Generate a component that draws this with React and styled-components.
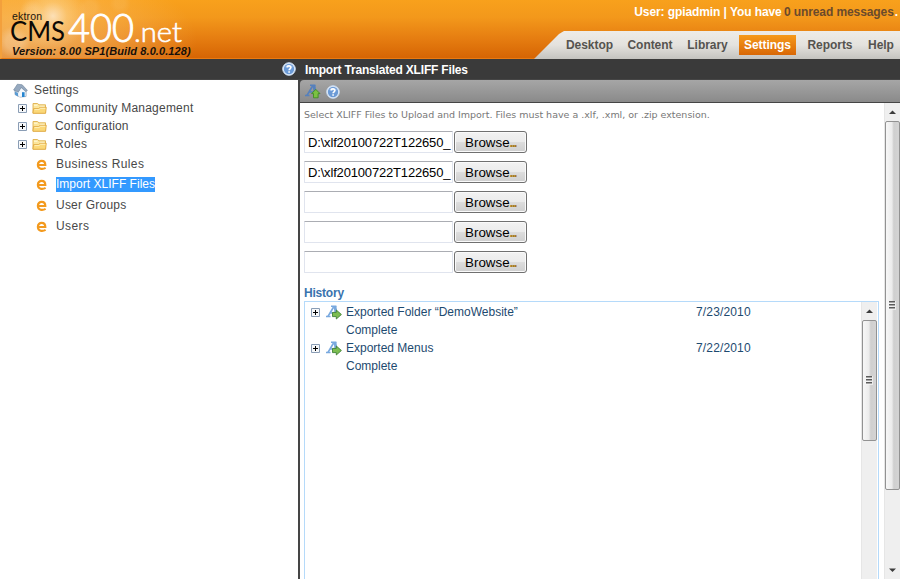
import React from 'react';
import styled, { createGlobalStyle } from 'styled-components';

const Global = createGlobalStyle`
  * { box-sizing: border-box; }
  body { margin: 0; background: #fff; font-family: "Liberation Sans", Arial, sans-serif; overflow: hidden; }
  svg { display: block; flex: none; overflow: visible; }
`;

const Page = styled.div`
  width: 900px; height: 579px; overflow: hidden; display: flex; flex-direction: column; white-space: nowrap;
`;
const Header = styled.header`
  height: 59px; flex: none; display: flex; justify-content: space-between;
  border-left: 2px solid #f3a03c; border-bottom: 1px solid #ea7a10;
  background:
    radial-gradient(circle at 30px 12px, #fff2 0 5px, transparent 12px),
    radial-gradient(circle at 12px 42px, #fff3 0 8px, transparent 16px),
    radial-gradient(circle at 88px 8px, #fff1 0 6px, transparent 12px),
    radial-gradient(circle at 118px 3px, #fff1 0 5px, transparent 11px),
    radial-gradient(circle at 51px 16px, #fff9 0, #ffe9b555 14px, transparent 34px),
    radial-gradient(ellipse 170px 75px at 25px 40px, #ffdf9f88 0, #ffcb7e66 45%, transparent 100%),
    linear-gradient(#f8a11c, #f3981b 30%, #e57c10 68%, #d66504);
`;
const Brand = styled.div`
  display: flex; flex-direction: column; padding: 10px 0 0 8px;
`;
const Version = styled.div`
  font: italic bold 11px/13px "Liberation Sans", sans-serif; color: #17100a; letter-spacing: .09px; padding-left: 2px;
`;
const HeaderRight = styled.div`
  width: 366px; display: flex; flex-direction: column; align-items: flex-end; justify-content: space-between;
`;
const UserLine = styled.div`
  font-size: 12px; font-weight: bold; line-height: 14px; color: #fff; padding: 5px 2px 0 0; letter-spacing: -.09px;
  span { color: #6b4a2c; margin-left: -1px; margin-right: 1px; }
`;
const Nav = styled.nav`
  width: 366px; height: 28px; margin-bottom: -1px; display: flex; align-items: center; padding-left: 26px;
  background: linear-gradient(#eeece8, #e4e2de 50%, #c4c3bf);
  clip-path: polygon(30px 0, 100% 0, 100% 100%, 0 100%, 25px 3px);
`;
const NavItem = styled.a`
  width: ${p => p.$w}px; height: 20px; margin-right: ${p => p.$gap || 0}px; flex: none;
  font-size: 12px; font-weight: bold; line-height: 20px; text-align: center; letter-spacing: -.05px;
  color: ${p => (p.$active ? '#fff' : '#55534f')};
  background: ${p => (p.$active ? 'linear-gradient(#f69a1b, #d96706)' : 'none')};
`;
const TitleBar = styled.div`
  height: 21px; flex: none; display: flex; align-items: center; background: #3a3a3a; border-bottom: 1px solid #454545; padding-left: 282px;
`;
const Title = styled.h1`
  margin: 1px 0 0 9px; font-size: 12px; line-height: 16px; color: #fff; letter-spacing: -.18px;
`;
const Body = styled.div`
  flex: 1; min-height: 0; display: flex;
`;
const Sidebar = styled.aside`
  width: 298px; flex: none; padding-top: 1px;
`;
const TreeRow = styled.div`
  height: ${p => p.$h}px; padding-left: ${p => p.$indent}px; display: flex; align-items: center;
`;
const TreeLabel = styled.span`
  margin-left: ${p => p.$gap}px; font-size: 12px; line-height: 15px; letter-spacing: ${p => p.$ls}px;
  color: ${p => (p.$selected ? '#fff' : '#484848')};
  background: ${p => (p.$selected ? '#3399ff' : 'none')};
`;
const PageList = styled.div`
  padding-top: 1px;
`;
const Spacer = styled.span`
  width: 5px; flex: none;
`;
const Main = styled.main`
  flex: 1; min-width: 0; display: flex; flex-direction: column; border-left: 2px solid #454545; background: #454545;
`;
const Toolbar = styled.div`
  height: 22px; flex: none; display: flex; align-items: center; gap: 5px; padding: 1px 0 0 5px;
  background: linear-gradient(#a6a6a6, #8a8a8a); border-radius: 4px 0 0 0;
`;
const Content = styled.div`
  flex: 1; min-height: 0; display: flex; margin-top: 1px; background: #fff;
`;
const Form = styled.section`
  width: 584px; flex: none; display: flex; flex-direction: column; padding: 5px 5px 0 4px;
`;
const Hint = styled.p`
  margin: 0 0 10px; font: 9.5px/13px "DejaVu Sans", Verdana, sans-serif; color: #777; letter-spacing: -.015px;
`;
const FileRow = styled.div`
  height: 22px; margin-bottom: 8px; flex: none; display: flex; gap: 1px;
`;
const FileField = styled.div`
  width: 149px; height: 22px; padding: 0 2px 0 3px; overflow: hidden; font-size: 13px; line-height: 21px; color: #000;
  border: 1px solid #e0e4ee; border-top-color: #abadb3; border-radius: 1px; letter-spacing: -.17px;
`;
const Browse = styled.button`
  width: 73px; height: 22px; padding: 1px 0 0; border: 1px solid #707070; border-radius: 3px; color: #000;
  font: 13.33px/19px "Liberation Sans", sans-serif; box-shadow: inset 0 0 0 1px #fafafa;
  background: linear-gradient(#f2f2f2, #ebebeb 49%, #dddddd 50%, #cfcfcf);
  i { color: #a8781c; font-style: normal; font-weight: bold; letter-spacing: -1.6px; }
`;
const HistoryTitle = styled.h2`
  margin: 5px 0 0; font-size: 12px; line-height: 15px; color: #3a73ae; letter-spacing: -.2px;
`;
const History = styled.div`
  flex: 1; min-height: 0; display: flex; justify-content: space-between; border: 1px solid #b5dafa; border-bottom: 0;
  padding-right: 1px;
`;
const HistoryList = styled.div`
  flex: 1; padding: 1px 0 0 6px;
`;
const HistoryRow = styled.div`
  height: 18px; display: grid; align-items: center; grid-template-columns: 15px 20px 350px auto;
  font-size: 12px; color: #1d4a70;
`;
const HistoryText = styled.span`
  grid-column: ${p => p.$col || 'auto'}; letter-spacing: ${p => p.$ls || 0}px;
`;
const Scroll = styled.div`
  width: 16px; flex: none; display: flex; flex-direction: column; align-items: center; background: #efefef; border-left: 1px solid #e6e6e6;
`;
const Thumb = styled.div`
  width: 15px; height: ${p => p.$h}px; flex: none; display: flex; align-items: center; justify-content: center;
  border: 1px solid #929292; border-radius: 2px; background: linear-gradient(90deg, #f7f7f7, #ececec 45%, #cfcfcf 60%, #d3d3d3 90%);
`;
const Grow = styled.div`flex: 1;`;

const Arrow = ({ down }) => (
  <svg width="15" height="18" viewBox="0 0 15 18">
    <path d={down ? 'M4 7.5h7L7.5 11z' : 'M4 11h7L7.5 7.5z'} fill="#3c3c3c" />
  </svg>
);
const Grip = () => (
  <svg width="9" height="9" viewBox="0 0 9 9">
    <path d="M0 0H8V9H0z" fill="#f6f6f6" opacity=".7" />
    <path d="M1 .5H7M1 3.5H7M1 6.5H7" stroke="#5c5c5c" />
    <path d="M1 1.5H7M1 4.5H7M1 7.5H7" stroke="#a6a6a6" />
  </svg>
);
const Help = () => (
  <svg width="14" height="14" viewBox="0 0 14 14">
    <circle cx="7" cy="7" r="6.3" fill="#edf3fb" stroke="#c4d8f0" strokeWidth="1" />
    <circle cx="7" cy="7" r="5.2" fill="#6b9ad6" />
    <path d="M3 5a4.6 4.6 0 0 1 8 0Q7 7 3 5z" fill="#8fb3e3" />
    <path d="M5 5.4C5.1 3.4 9 3.4 8.9 5.5C8.8 6.8 7.1 6.8 7.1 8.3" fill="none" stroke="#fff" strokeWidth="1.6" />
    <path d="M6.3 9.2H7.9V10.7H6.3z" fill="#fff" />
  </svg>
);
const Plus = () => (
  <svg width="9" height="9" viewBox="0 0 9 9">
    <path d="M.5.5H8.5V8.5H.5z" fill="#f6f8fa" stroke="#8a9db5" />
    <path d="M2 4.5H7M4.5 2V7" stroke="#000" />
  </svg>
);
const Folder = () => (
  <svg width="15" height="13" viewBox="0 0 15 13">
    <path d="M1 11V1.5H5.5L7 2.8H13.5V11z" fill="#fbe59b" stroke="#dfb04c" strokeWidth=".9" />
    <path d="M2 3.2H5.5M8 4.3H12.5" stroke="#fff9dc" />
    <path d="M.9 11.3L1.6 6.6H6.6L8.2 5.3H14.3L13.6 11.3z" fill="#fbd878" stroke="#dda53e" strokeWidth=".8" />
    <path d="M2.5 7.6H7L8.6 6.3H13.3" fill="none" stroke="#fff3c2" strokeWidth=".9" />
  </svg>
);
const Home = () => (
  <svg width="15" height="15" viewBox="0 0 15 15">
    <path d="M2 7L7 3L13 7V13.5L7 14L2 11.5z" fill="#e8f0f8" stroke="#8597ad" strokeWidth=".8" />
    <path d="M.6 7L4.4 1.2L9.2 1.8L14.4 7.4L12.8 8.5L8.2 4.5L5.4 9.2z" fill="#96a9bf" stroke="#6c8199" strokeWidth=".6" />
    <path d="M5.8 9L8.2 6L12.4 9V13.4L5.8 13.8z" fill="#f5f9fd" />
    <path d="M9 9.2H11.6V14H9z" fill="#2685d0" />
    <path d="M2 8.5L5 10V13.5L2 11.7z" fill="#5a9bd3" />
  </svg>
);
const EktronE = () => (
  <svg width="11" height="11" viewBox="0 0 11 11">
    <path d="M1.8 6H9.3C9.3 .6 1.9 .7 1.9 5.8C1.9 10.4 6.6 10.6 9.6 8.9" fill="none" stroke="#f39a1e" strokeWidth="2.2" />
  </svg>
);
const Translate = ({ up }) => (
  <svg width="16" height="15" viewBox="0 0 16 15">
    <g fill="none" stroke={up ? '#5580bd' : '#79a9df'}>
      <path d="M2 11.4L7.6 2M4.4 8H9" strokeWidth="1.7" />
      <path d="M9 1.2L10.4 11" strokeWidth="2.8" />
      <path d="M5 1.2H10.4M0 11.6H4.5" strokeWidth="1.5" />
    </g>
    {up
      ? <path d="M10.8 5.4L15 9.6H13.1V13.8H8.5V9.6H6.6z" fill="#7cc142" stroke="#3f8d24" strokeWidth=".9" />
      : <path d="M6.5 7.4H10.3V5L15.4 9.5L10.3 14V11.6H6.5z" fill="#7cbd50" stroke="#3f8135" strokeWidth=".9" />}
  </svg>
);
const Logo = () => (
  <svg width="180" height="35" viewBox="10 10 180 35">
    <g fontFamily="Lato, sans-serif">
      <text x="12" y="19.5" fontFamily="Liberation Sans, sans-serif" fontSize="10.5" textLength="30" fill="#1c140c">ektron</text>
      <text x="10" y="41" fontSize="27" textLength="55" lengthAdjust="spacingAndGlyphs" fill="#0d0905">CMS</text>
      <text x="68" y="41.5" fontSize="40" fontWeight="300" textLength="66" lengthAdjust="spacingAndGlyphs" fill="#fff" stroke="#fff" strokeWidth="1">400</text>
      <text x="134" y="41.5" fontSize="28" fontWeight="300" textLength="48" lengthAdjust="spacingAndGlyphs" fill="#fff" stroke="#fff" strokeWidth=".6">.net</text>
    </g>
  </svg>
);

const folders = [
  { name: 'Community Management', ls: 0.22 }, { name: 'Configuration', ls: 0.18 }, { name: 'Roles', ls: 0.35 },
];
const pages = [
  { name: 'Business Rules', h: 20, ls: 0.4 }, { name: 'Import XLIFF Files', h: 21, ls: 0.02, selected: true },
  { name: 'User Groups', h: 20, ls: 0.22 }, { name: 'Users', h: 22, ls: 0.4 },
];
const nav = [
  { name: 'Desktop', w: 59, gap: 3 }, { name: 'Content', w: 56, gap: 3 }, { name: 'Library', w: 53, gap: 5 },
  { name: 'Settings', w: 57, gap: 7, active: true }, { name: 'Reports', w: 54, gap: 6 }, { name: 'Help', w: 36 },
];
const files = ['D:\\xlf20100722T122650_', 'D:\\xlf20100722T122650_', '', '', ''];
const history = [
  { name: 'Exported Folder “DemoWebsite”', date: '7/23/2010' },
  { name: 'Exported Menus', date: '7/22/2010' },
];

export default function App() {
  return (
    <Page>
      <Global />
      <Header>
        <Brand>
          <Logo />
          <Version>Version: 8.00 SP1(Build 8.0.0.128)</Version>
        </Brand>
        <HeaderRight>
          <UserLine>User: gpiadmin | You have <span>0 unread messages</span>.</UserLine>
          <Nav>
            {nav.map(n => <NavItem key={n.name} $w={n.w} $gap={n.gap} $active={n.active}>{n.name}</NavItem>)}
          </Nav>
        </HeaderRight>
      </Header>
      <TitleBar><Help /><Title>Import Translated XLIFF Files</Title></TitleBar>
      <Body>
        <Sidebar>
          <TreeRow $h={18} $indent={13}><Home /><TreeLabel $gap={6} $ls={0.15}>Settings</TreeLabel></TreeRow>
          {folders.map(f => (
            <TreeRow key={f.name} $h={18} $indent={18}>
              <Plus /><Spacer /><Folder /><TreeLabel $gap={8} $ls={f.ls}>{f.name}</TreeLabel>
            </TreeRow>
          ))}
          <PageList>
            {pages.map(p => (
              <TreeRow key={p.name} $h={p.h} $indent={36}>
                <EktronE /><TreeLabel $gap={9} $ls={p.ls} $selected={p.selected}>{p.name}</TreeLabel>
              </TreeRow>
            ))}
          </PageList>
        </Sidebar>
        <Main>
          <Toolbar><Translate up /><Help /></Toolbar>
          <Content>
            <Form>
              <Hint>Select XLIFF Files to Upload and Import. Files must have a .xlf, .xml, or .zip extension.</Hint>
              {files.map((f, i) => (
                <FileRow key={i}><FileField>{f}</FileField><Browse>Browse<i>...</i></Browse></FileRow>
              ))}
              <HistoryTitle>History</HistoryTitle>
              <History>
                <HistoryList>
                  {history.map(h => (
                    <React.Fragment key={h.name}>
                      <HistoryRow><Plus /><Translate /><HistoryText>{h.name}</HistoryText><HistoryText $ls={0.15}>{h.date}</HistoryText></HistoryRow>
                      <HistoryRow><HistoryText $col="3">Complete</HistoryText></HistoryRow>
                    </React.Fragment>
                  ))}
                </HistoryList>
                <Scroll><Arrow /><Thumb $h={121}><Grip /></Thumb></Scroll>
              </History>
            </Form>
            <Scroll><Arrow /><Thumb $h={369}><Grip /></Thumb><Grow /><Arrow down /></Scroll>
          </Content>
        </Main>
      </Body>
    </Page>
  );
}
